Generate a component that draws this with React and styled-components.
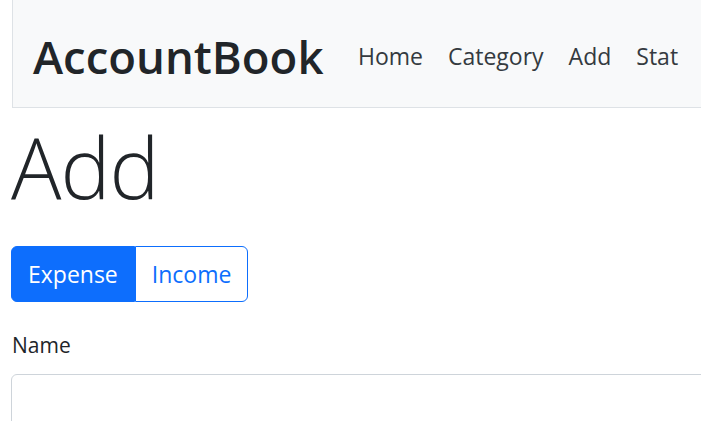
import React from "react";
import styled, { createGlobalStyle } from "styled-components";

const GlobalStyle = createGlobalStyle`
  body {
    margin: 0;
    background: #fff;
    font-family: "Open Sans", "Noto Sans", sans-serif;
    color: #212529;
    overflow: hidden;
  }
  * { box-sizing: border-box; }
`;

const Page = styled.div`
  padding-left: 11px;
  width: 760px;
`;

const Navbar = styled.nav`
  display: flex;
  align-items: center;
  height: 108px;
  margin-left: 1px;
  padding: 4px 20px 0;
  background: #f8f9fa;
  border-left: 1px solid #dee2e6;
  border-bottom: 1px solid #dee2e6;
`;

const Brand = styled.a`
  font-size: 45.5px;
  font-weight: 600;
  color: #212529;
  margin-right: 22px;
  text-decoration: none;
`;

const NavLinks = styled.div`
  display: flex;
`;

const NavLink = styled.a`
  font-size: 23px;
  color: #343a40;
  padding: 0 12.5px;
  text-decoration: none;
`;

const Title = styled.h1`
  margin: 4px 0 0;
  font-size: 84px;
  font-weight: 300;
  line-height: 110px;
  letter-spacing: -1px;
`;

const ButtonGroup = styled.div`
  display: inline-flex;
  margin-top: 24px;
`;

const ToggleButton = styled.button`
  height: 56px;
  padding: 0 16px;
  font-family: inherit;
  font-size: 23px;
  border: 1px solid #0d6efd;
  background: ${(p) => (p.active ? "#0d6efd" : "#fff")};
  color: ${(p) => (p.active ? "#fff" : "#0d6efd")};
  border-radius: ${(p) => (p.first ? "6px 0 0 6px" : "0 6px 6px 0")};
`;

const Field = styled.div`
  margin-top: 28px;
`;

const Label = styled.label`
  display: block;
  font-size: 21px;
  line-height: 30px;
  margin-bottom: 14px;
  margin-left: 1px;
`;

const Input = styled.input`
  display: block;
  width: 100%;
  height: 60px;
  border: 1px solid #ced4da;
  border-radius: 6px;
  font-family: inherit;
  font-size: 23px;
`;

export default function App() {
  return (
    <>
      <GlobalStyle />
      <Page>
        <Navbar>
          <Brand>AccountBook</Brand>
          <NavLinks>
            <NavLink>Home</NavLink>
            <NavLink>Category</NavLink>
            <NavLink>Add</NavLink>
            <NavLink>Stat</NavLink>
          </NavLinks>
        </Navbar>
        <Title>Add</Title>
        <ButtonGroup>
          <ToggleButton active first>Expense</ToggleButton>
          <ToggleButton>Income</ToggleButton>
        </ButtonGroup>
        <Field>
          <Label>Name</Label>
          <Input />
        </Field>
      </Page>
    </>
  );
}
